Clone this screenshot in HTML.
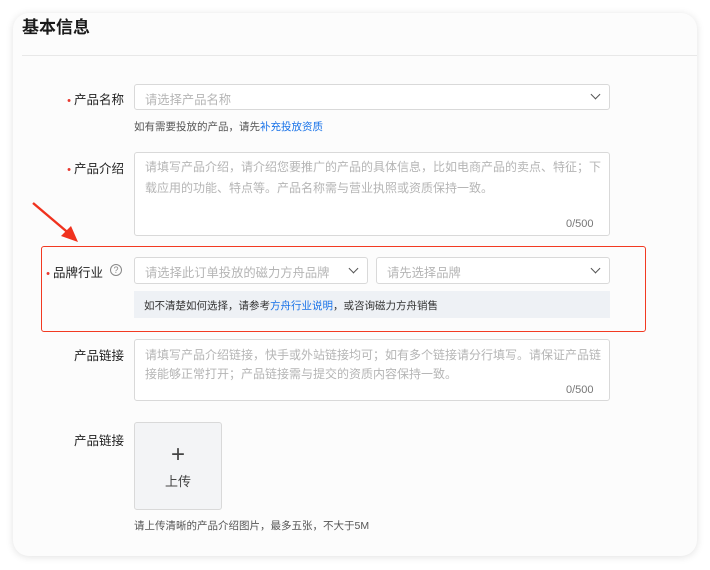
<!DOCTYPE html>
<html><head><meta charset="utf-8"><style>
*{box-sizing:border-box;margin:0;padding:0}
body{width:710px;height:570px;background:#fff;font-family:"Liberation Sans","Noto Sans CJK SC",sans-serif;position:relative;overflow:hidden;color:#222}
.card{position:absolute;left:13px;top:13px;width:684px;height:543px;border-radius:16px;background:#fcfcfc;box-shadow:0 1px 8px rgba(0,0,0,.12)}
.a{position:absolute}
.title{left:22px;top:13px;font-size:17px;font-weight:bold;color:#1a1a1a}
.hr{left:22px;top:55px;width:675px;height:1px;background:#e8e8e8}
.lbl{font-size:12.5px;color:#222;text-align:right;width:90px}
.dot{color:#e8382f;font-size:11px;margin-right:3px}
.inp{border:1px solid #d9d9d9;border-radius:3px;background:#fff;font-size:12.3px;color:#b5b5b5;padding:5px 10px}
.ta{font-size:12px;padding:4px 6px 4px 10px}
.chev{position:absolute;right:10px;top:7px;width:7px;height:7px;border-right:1.3px solid #555;border-bottom:1.3px solid #555;transform:rotate(45deg)}
.help{font-size:10.5px;color:#555}
.blue{color:#1a73e8}
.cnt{font-size:11px;color:#777}
</style></head><body>
<div class="card"></div>
<div class="a title">基本信息</div>
<div class="a hr"></div>

<div class="a lbl" style="left:34px;top:89px"><span class="dot">•</span>产品名称</div>
<div class="a inp" style="left:134px;top:84px;width:476px;height:26px;padding-top:5px">请选择产品名称<div class="chev" style="top:6px"></div></div>
<div class="a help" style="left:134px;top:119px">如有需要投放的产品，请先<span class="blue">补充投放资质</span></div>

<div class="a lbl" style="left:34px;top:158px"><span class="dot">•</span>产品介绍</div>
<div class="a inp ta" style="left:134px;top:152px;width:476px;height:84px;line-height:21px">请填写产品介绍，请介绍您要推广的产品的具体信息，比如电商产品的卖点、特征；下载应用的功能、特点等。产品名称需与营业执照或资质保持一致。</div>
<div class="a cnt" style="left:566px;top:218px">0/500</div>

<svg class="a" style="left:28px;top:198px" width="56" height="50"><line x1="5" y1="5" x2="44" y2="38" stroke="#f0321e" stroke-width="2.4"/><polygon points="50,44 33,38 43,28" fill="#f0321e"/></svg>
<div class="a" style="left:41px;top:246px;width:605px;height:86px;border:1.5px solid #f23a22;border-radius:3px"></div>
<div class="a lbl" style="left:13px;top:262px"><span class="dot">•</span>品牌行业</div>
<div class="a" style="left:110px;top:264px;width:12px;height:12px;border:1px solid #888;border-radius:50%;font-size:9px;color:#888;text-align:center;line-height:10px">?</div>
<div class="a inp" style="left:134px;top:257px;width:234px;height:27px">请选择此订单投放的磁力方舟品牌<div class="chev"></div></div>
<div class="a inp" style="left:376px;top:257px;width:234px;height:27px">请先选择品牌<div class="chev"></div></div>
<div class="a help" style="left:134px;top:291px;width:476px;height:27px;background:#eef1f5;padding:7px 10px;color:#333">如不清楚如何选择，请参考<span class="blue">方舟行业说明</span>，或咨询磁力方舟销售</div>

<div class="a lbl" style="left:34px;top:345px">产品链接</div>
<div class="a inp ta" style="left:134px;top:339px;width:476px;height:62px;line-height:19px;padding-top:6px">请填写产品介绍链接，快手或外站链接均可；如有多个链接请分行填写。请保证产品链接能够正常打开；产品链接需与提交的资质内容保持一致。</div>
<div class="a cnt" style="left:566px;top:384px">0/500</div>

<div class="a lbl" style="left:34px;top:430px">产品链接</div>
<div class="a" style="left:134px;top:422px;width:88px;height:88px;border:1px solid #d9d9d9;border-radius:3px;background:#f3f4f6;text-align:center;color:#444">
<div style="font-size:24px;line-height:24px;margin-top:20px;font-weight:300">+</div>
<div style="font-size:13px;margin-top:4px">上传</div></div>
<div class="a help" style="left:134px;top:518px">请上传清晰的产品介绍图片，最多五张，不大于5M</div>
</body></html>
